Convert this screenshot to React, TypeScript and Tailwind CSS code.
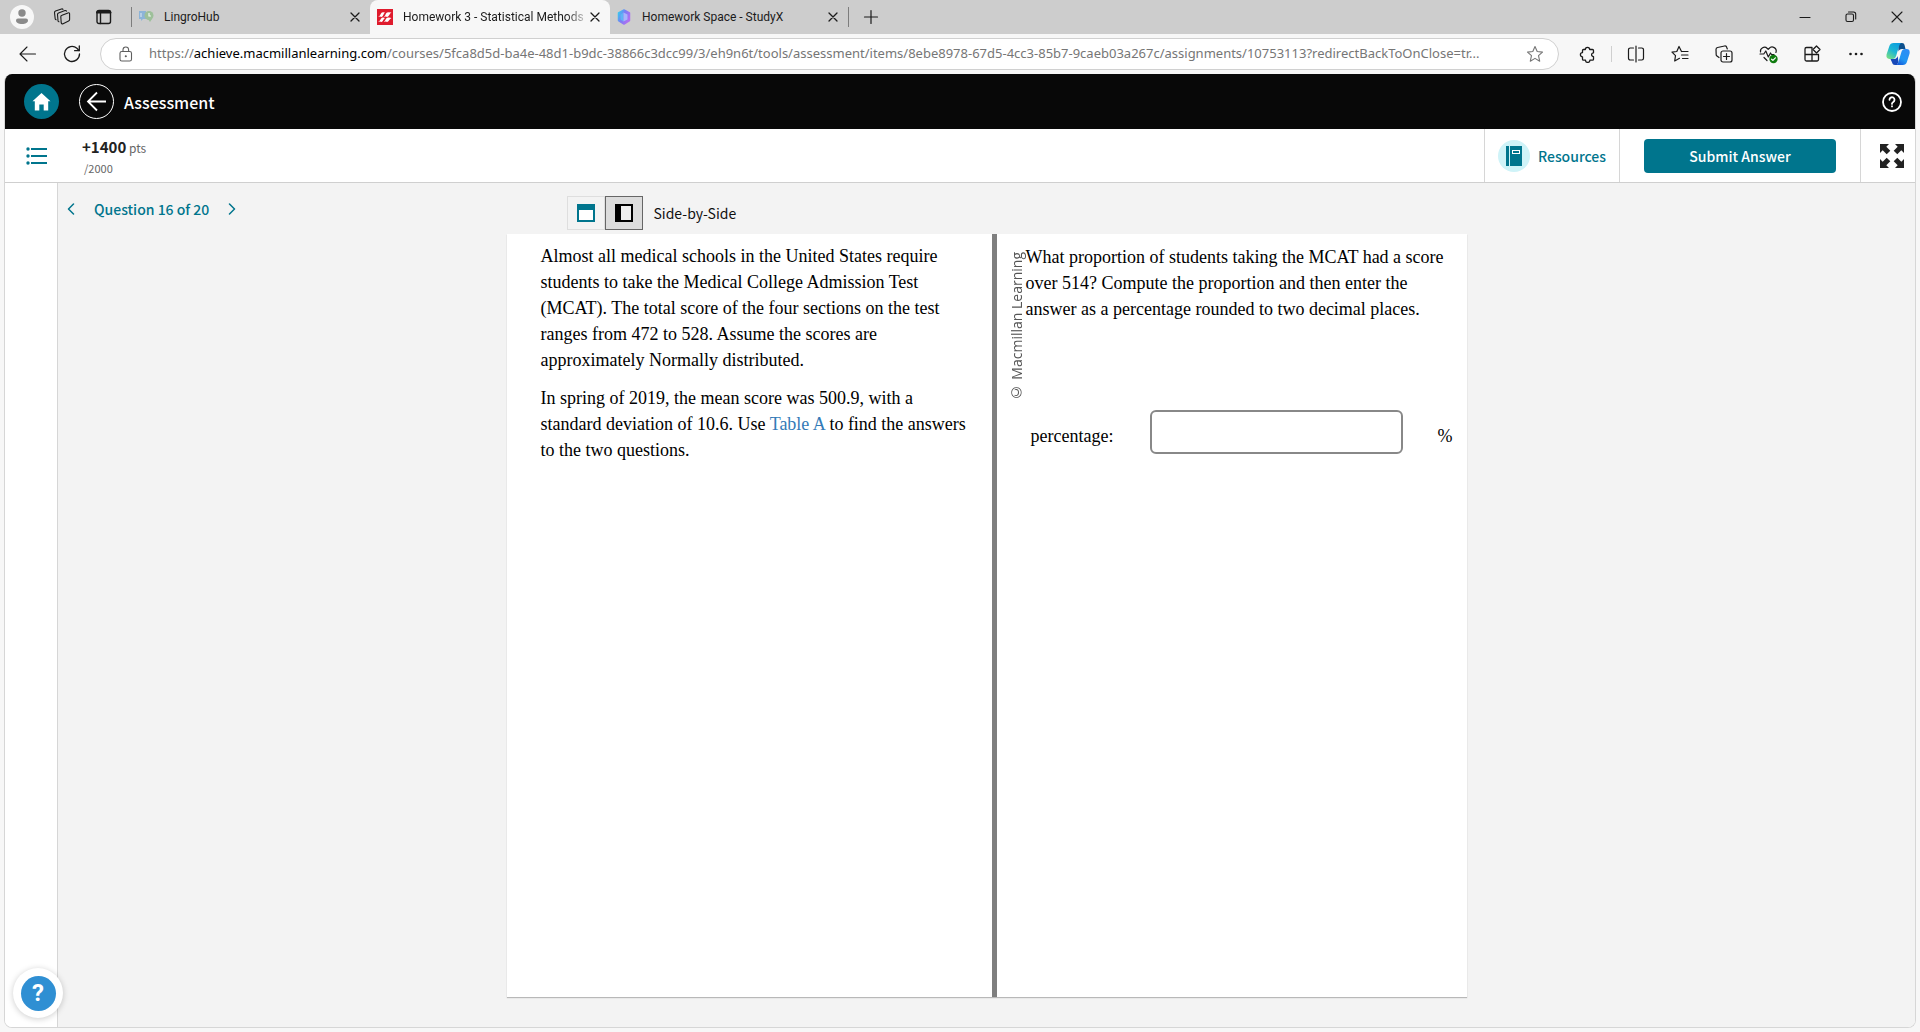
import React, { useState } from 'react';

const uiFont = "font-['Noto_Sans','Open_Sans',sans-serif]";
const appFont = "font-['Noto_Sans_CJK_SC',sans-serif]";
const serifFont = "font-['Liberation_Serif',serif]";

type IconProps = {
    size?: number;
    box?: number;
    stroke?: number;
    className?: string;
    children: React.ReactNode;
};

const Icon = ({ size = 20, box = 20, stroke = 1.1, className = '', children }: IconProps) => (
    <svg
        width={size}
        height={size}
        viewBox={`0 0 ${box} ${box}`}
        fill="none"
        stroke="currentColor"
        strokeWidth={stroke}
        strokeLinecap="round"
        strokeLinejoin="round"
        className={`shrink-0 ${className}`}
        aria-hidden="true"
    >
        {children}
    </svg>
);

const CloseIcon = () => (
    <Icon size={12} box={12} stroke={1.3}>
        <path d="M2 2l8 8M10 2l-8 8" />
    </Icon>
);

const MacmillanLogo = () => (
    <svg width="16" height="16" viewBox="0 0 16 16" className="shrink-0" aria-hidden="true">
        <rect width="16" height="16" fill="#df1b2d" />
        <path d="M1.200 8Q3.200 6.500 4 4.500Q5 2.500 8 3.600Q6.800 4.500 6.300 6Q5.800 7.600 4.600 8Q3 7 1.200 8z" fill="#fff" />
        <path d="M6.800 8Q8.300 6.500 9 4.500Q10 2.500 14.500 3.600Q13 4.500 12.300 6Q11.500 7.600 10.200 8Q8.600 7 6.800 8z" fill="#fff" />
        <path d="M1.200 13Q3.200 11.500 4 9.700Q5 8 8 8.900Q6.800 9.700 6.300 11Q5.800 12.600 4.600 13Q3 12 1.200 13z" fill="#fff" />
        <path d="M6.800 13Q8.300 11.500 9 9.700Q10 8 14.500 8.900Q13 9.700 12.300 11Q11.500 12.600 10.200 13Q8.600 12 6.800 13z" fill="#fff" />
    </svg>
);

const LingroLogo = () => (
    <svg width="15" height="14" viewBox="0 0 15 14" className="shrink-0" aria-hidden="true">
        <path d="M0 1h7v8H4l-2 2V9H0z" fill="#8db4d8" />
        <path d="M2 3v4" stroke="#dfe9f3" strokeWidth="1" />
        <circle cx="10" cy="5.500" r="4.500" fill="#9dc09a" />
        <path d="M9 9h4l-2 3z" fill="#9dc09a" />
        <path d="M10 3v3h2" stroke="#eef5ee" strokeWidth="1.200" fill="none" />
    </svg>
);

const StudyXLogo = () => (
    <svg width="14" height="16" viewBox="0 0 14 16" className="shrink-0" aria-hidden="true">
        <defs>
            <linearGradient id="studyx" x1="0" y1="0" x2="1" y2="0.6">
                <stop offset="0" stopColor="#2fd3ee" />
                <stop offset="0.5" stopColor="#7b7cf5" />
                <stop offset="1" stopColor="#b070f2" />
            </linearGradient>
        </defs>
        <path d="M7 1l5.500 3v7.500L7 15l-5.500-3.500V4z" fill="url(#studyx)" stroke="url(#studyx)" strokeWidth="1.500" strokeLinejoin="round" />
        <path d="M6.500 3.500L3.500 5.500v5l3 2z" fill="#5fb4f5" />
        <path d="M6.500 3.500l4 2v5l-4 2z" fill="#a9b4fb" />
    </svg>
);

const CopilotLogo = () => (
    <svg width="24" height="24" viewBox="0 0 24 24" className="shrink-0" aria-hidden="true">
        <defs>
            <linearGradient id="copilotA" x1="0.8" y1="0" x2="0.1" y2="1">
                <stop offset="0" stopColor="#0a9be0" />
                <stop offset="0.5" stopColor="#1bb6d4" />
                <stop offset="1" stopColor="#7ce07f" />
            </linearGradient>
            <linearGradient id="copilotB" x1="0.8" y1="0" x2="0.2" y2="1">
                <stop offset="0" stopColor="#2f8cf5" />
                <stop offset="0.6" stopColor="#2196f3" />
                <stop offset="1" stopColor="#1557d8" />
            </linearGradient>
        </defs>
        <path d="M12 1h4c1.500 0 2.200.9 2.600 2.200L19.500 7H16c-2 0-3 1-3.500 2.600z" fill="#0d4f8c" />
        <path d="M7.500 1H16c-1.700.2-2.400 1.400-2.900 3l-3 10c-.6 2-1.700 3-3.600 3H3.500C.8 17 0 15 .6 12.300L3.400 4C4 2 5.400 1 7.500 1z" fill="url(#copilotA)" />
        <path d="M4.500 17h4c1.700-.1 2.700-1.200 3.200-2.900L12.500 20l-1.600 3H9c-1.600 0-2.400-.8-2.800-2.200z" fill="#1748b8" />
        <path d="M16.800 23H9.500c1.700-.2 2.400-1.400 2.900-3l3-10c.6-2 1.700-3 3.600-3h1.600c2.700 0 3.500 2 2.900 4.700L20.900 20c-.6 2-2 3-4.100 3z" fill="url(#copilotB)" />
    </svg>
);

const TabBar = () => (
    <header className="flex h-[34px] items-stretch bg-[#cdcdcd] font-['Roboto',sans-serif] text-xs text-[#1b1b1b]">
        <div className="flex w-[131px] shrink-0 items-center">
            <button aria-label="Profile" className="ml-[10px] flex size-6 items-center justify-center rounded-full bg-[#f7f7f7]">
                <svg width="14" height="16" viewBox="0 0 14 16" fill="#8a8a8a" aria-hidden="true">
                    <circle cx="7" cy="4" r="3.700" />
                    <path d="M3 9.500h8a2 2 0 0 1 2 2c0 2-2.500 3.500-6 3.500s-6-1.500-6-3.500a2 2 0 0 1 2-2z" />
                </svg>
            </button>
            <button aria-label="Workspaces" className="ml-[18px] flex size-5 items-center justify-center">
                <Icon size={18} box={18}>
                    <path d="M9 7.200l6-2.300q1.600-.5 1.600 1v5.600q0 1-1 1.500l-5.500 2.700q-1.600.6-1.900-1L7.800 8.800q-.1-1.200 1.200-1.600z" />
                    <path d="M6 13.800q-.8 0-1-1L4.500 6.500q0-1.200 1-1.600L12 2.600q1-.3 1.500.5" />
                    <path d="M3.200 11.800q-.8 0-1-1L1.500 4.700q0-1.200 1-1.600L8.500 1q1-.3 1.500.4" />
                </Icon>
            </button>
            <button aria-label="Tab actions" className="ml-[22px] flex size-5 items-center justify-center">
                <Icon size={16} box={16} stroke={1.4}>
                    <rect x="1" y="1.500" width="13.500" height="13" rx="2" />
                    <path d="M1 3.500h13.500M1.500 2.500h12.500" strokeWidth="2" />
                    <path d="M4.500 4v10.500" />
                </Icon>
            </button>
        </div>
        <div className="my-[7px] w-px shrink-0 bg-[#7d7d7d]" />
        <div className="flex w-[238px] items-center pr-[9px] pl-[7px]">
            <LingroLogo />
            <span className="ml-[10px] flex-1">LingroHub</span>
            <button aria-label="Close tab"><CloseIcon /></button>
        </div>
        <div className="flex w-60 items-center rounded-t-lg bg-[#f7f7f7] pr-[9px] pl-[7px]">
            <MacmillanLogo />
            <span className="ml-[10px] flex-1 overflow-hidden whitespace-nowrap [mask-image:linear-gradient(to_right,black_88%,transparent)]">
                Homework 3 - Statistical Methods
            </span>
            <button aria-label="Close tab"><CloseIcon /></button>
        </div>
        <div className="flex w-[238px] items-center pr-[9px] pl-[7px]">
            <StudyXLogo />
            <span className="ml-[11px] flex-1 whitespace-nowrap">Homework Space - StudyX</span>
            <button aria-label="Close tab"><CloseIcon /></button>
        </div>
        <div className="my-[7px] w-px shrink-0 bg-[#7d7d7d]" />
        <button aria-label="New tab" className="ml-[14px]">
            <Icon size={16} box={16} stroke={1.2}>
                <path d="M8 1.500v13M1.500 8h13" />
            </Icon>
        </button>
        <div className="ml-auto flex">
            <button aria-label="Minimize" className="flex w-[46px] items-center justify-center">
                <Icon size={12} box={12}><path d="M1 6.500h10" /></Icon>
            </button>
            <button aria-label="Restore" className="flex w-[46px] items-center justify-center">
                <Icon size={12} box={12}>
                    <rect x="1" y="3" width="7.500" height="7.500" rx="1.500" />
                    <path d="M3.500 1H8.500a2.200 2.200 0 0 1 2.200 2.200V8" />
                </Icon>
            </button>
            <button aria-label="Close window" className="flex w-[46px] items-center justify-center">
                <Icon size={12} box={12}><path d="M1 1l10 10M11 1L1 11" /></Icon>
            </button>
        </div>
    </header>
);

const ToolButton = ({ label, children }: { label: string; children: React.ReactNode }) => (
    <button aria-label={label} className="flex w-11 shrink-0 items-center justify-center">
        {children}
    </button>
);

const AddressBar = () => (
    <div className="flex h-10 items-center text-[#1b1b1b]">
        <button aria-label="Back" className="ml-[18px]">
            <Icon><path d="M17.500 10H2M9 3l-7 7 7 7" /></Icon>
        </button>
        <button aria-label="Refresh" className="ml-6">
            <Icon stroke={1.3}>
                <path d="M17.500 10a7.500 7.500 0 1 1-2.600-5.700L17 6.500" />
                <path d="M17.300 2v4.700h-4.700" />
            </Icon>
        </button>
        <div className="ml-[18px] flex h-8 min-w-0 flex-1 items-center rounded-full border border-[#d0d0d0] bg-white pr-[14px] pl-[17px]">
            <Icon size={16} box={16} className="text-[#5f5f5f]">
                <rect x="2" y="5.500" width="11.500" height="9.500" rx="1.800" />
                <path d="M5 5.500V3.800a2.800 2.800 0 0 1 5.600 0v1.700" />
                <circle cx="7.800" cy="10.200" r=".5" fill="currentColor" />
            </Icon>
            <div className="ml-[15px] min-w-0 flex-1 truncate text-[13px] text-[#767676]">
                https://<span className="text-black">achieve.macmillanlearning.com</span>/courses/5fca8d5d-ba4e-48d1-b9dc-38866c3dcc99/3/eh9n6t/tools/assessment/items/8ebe8978-67d5-4cc3-85b7-9caeb03a267c/assignments/10753113?redirectBackToOnClose=tr...
            </div>
            <button aria-label="Add to favorites" className="ml-4 text-[#767676]">
                <Icon size={18} box={18}>
                    <path d="M9 1.500l2.200 5 5.300.6-4 3.600 1.200 5.500L9 13.400l-4.700 2.800 1.200-5.500-4-3.600 5.300-.6z" />
                </Icon>
            </button>
        </div>
        <div className="flex shrink-0 items-center pl-1.5">
            <ToolButton label="Extensions">
                <Icon size={17} box={17} stroke={1.3}>
                    <path d="M4.500 3.500h1.800a2.200 2.200 0 0 1 4.400 0h2.800a1 1 0 0 1 1 1v2.300a1.900 1.900 0 1 0 0 3.800v2.600a1 1 0 0 1-1 1h-2.600a2.200 2.200 0 0 1-4.400 0H4.500a1 1 0 0 1-1-1v-2.400a2.100 2.100 0 0 1 0-4.200V4.500a1 1 0 0 1 1-1z" />
                </Icon>
            </ToolButton>
            <div className="mx-0.5 h-4 w-px bg-[#cfcfcf]" />
            <ToolButton label="Split screen">
                <Icon size={18} box={18} stroke={1.2}>
                    <path d="M9 1v16M6.500 3H3.200a1.700 1.700 0 0 0-1.700 1.700v8.600A1.700 1.700 0 0 0 3.200 15h3.300M11.500 3h3.300a1.700 1.700 0 0 1 1.700 1.700v8.600a1.700 1.700 0 0 1-1.700 1.700h-3.300" />
                </Icon>
            </ToolButton>
            <ToolButton label="Favorites">
                <Icon size={18} box={18} stroke={1.2}>
                    <path d="M10.500 6.500L8 1.500 5.800 6.500l-4.800.7 3.500 3.500L3.700 16l4.800-2.700M10.500 6.500h6.500M10.500 10h6.500M11.500 13.500h5.500" />
                </Icon>
            </ToolButton>
            <ToolButton label="Collections">
                <Icon size={18} box={18} stroke={1.2}>
                    <rect x="6" y="6" width="11" height="11" rx="2" />
                    <path d="M11.500 8.500v6M8.500 11.500h6M4 12.500L2 11a2 2 0 0 1-.8-1.200L1 4.500a2 2 0 0 1 1.600-2L9.500 1a2 2 0 0 1 2.300 1.500l.5 1.500" />
                </Icon>
            </ToolButton>
            <ToolButton label="Browser essentials">
                <Icon size={19} box={19} stroke={1.2}>
                    <path d="M8 15.500L5 12.500M1.500 7A4 4 0 0 1 8.300 3.500l.9.900.9-.9a4 4 0 0 1 6.800 4M1 9h3.800l2-3 2.500 6L11.500 8l1 1.500H15" />
                    <circle cx="14.500" cy="14" r="4.200" fill="#107c10" stroke="none" />
                    <path d="M12.600 14.200l1.300 1.200 2.500-2.600" stroke="#fff" />
                </Icon>
            </ToolButton>
            <ToolButton label="Apps">
                <Icon size={18} box={18} stroke={1.3}>
                    <path d="M9 2.500H3.500a1.500 1.500 0 0 0-1.500 1.500v10.500a1.500 1.500 0 0 0 1.500 1.500h10.500a1.500 1.500 0 0 0 1.500-1.500V9.500H2M9 2.500V16" />
                    <path d="M13.500 1l3.500 3.500L13.500 8 10 4.500z" fill="#f7f7f7" />
                </Icon>
            </ToolButton>
            <ToolButton label="Settings and more">
                <Icon size={16} box={16}>
                    <g fill="currentColor" stroke="none">
                        <circle cx="2.500" cy="8" r="1.300" />
                        <circle cx="8" cy="8" r="1.300" />
                        <circle cx="13.500" cy="8" r="1.300" />
                    </g>
                </Icon>
            </ToolButton>
            <button aria-label="Copilot" className="pr-[10px] pl-2">
                <CopilotLogo />
            </button>
        </div>
    </div>
);

const AppHeader = () => (
    <div className="flex h-[55px] shrink-0 items-center bg-[#080808] pr-[13px] pl-[19px] text-white">
        <a href="#home" aria-label="Home" className="flex size-[35px] items-center justify-center rounded-full bg-[#00758d]">
            <svg width="19" height="19" viewBox="0 0 19 19" fill="#fff" aria-hidden="true">
                <path d="M9.500 1l9 8.200h-2.300V18.500h-4.500v-6h-4.400v6H2.800V9.200H.5z" />
            </svg>
        </a>
        <a href="#back" aria-label="Back" className="ml-5 flex size-[35px] items-center justify-center rounded-full border border-white">
            <Icon size={21} box={21} stroke={1.8}>
                <path d="M20 10.500H2M11 1.500l-9 9 9 9" strokeLinecap="butt" strokeLinejoin="miter" />
            </Icon>
        </a>
        <h1 className="ml-[10px] text-base font-medium">Assessment</h1>
        <button aria-label="Help" className="ml-auto">
            <Icon stroke={1.8}>
                <circle cx="10" cy="10" r="9" />
                <path d="M7.500 7.800a2.500 2.500 0 1 1 3.800 2.100c-.8.500-1.300.8-1.300 1.700v.3M10 14.200v.2" />
            </Icon>
        </button>
    </div>
);

const ScoreBar = () => (
    <div className="flex h-[54px] shrink-0 items-stretch border-b border-[#cfcfcf] bg-white">
        <button aria-label="Question list" className="ml-[21px] flex items-center text-[#00758d]">
            <svg width="22" height="18" viewBox="0 0 22 18" fill="currentColor" aria-hidden="true">
                <circle cx="2" cy="2" r="1.700" />
                <circle cx="2" cy="9" r="1.700" />
                <circle cx="2" cy="16" r="1.700" />
                <path d="M5 1h16v2H5zM5 8h16v2H5zM5 15h16v2H5z" />
            </svg>
        </button>
        <div className="ml-[34px] flex flex-col pt-2 text-xs leading-5 text-[#666]">
            <p>
                <strong className="text-[15px] font-bold text-[#222]">+1400</strong> pts
            </p>
            <p className="pl-0.5 text-[11px]">/2000</p>
        </div>
        <button className="ml-auto flex items-center border-l border-[#d6d6d6] px-[13px] text-sm font-medium text-[#00758d]">
            <svg width="32" height="32" viewBox="0 0 32 32" aria-hidden="true">
                <circle cx="16" cy="16" r="16" fill="#cff3f8" />
                <path d="M8 6h3v20H8zM12 6h12v20H12z" fill="#00758d" />
                <rect x="14.500" y="10.500" width="7" height="3" fill="none" stroke="#fff" />
            </svg>
            <span className="ml-2">Resources</span>
        </button>
        <div className="flex items-center border-x border-[#d6d6d6] px-6">
            <button className="h-[34px] w-48 rounded bg-[#00758d] text-sm font-medium text-white">Submit Answer</button>
        </div>
        <button aria-label="Full screen" className="flex w-[54px] items-center justify-center pl-2">
            <svg width="24" height="24" viewBox="0 0 24 24" fill="#222" aria-hidden="true">
                <path d="M0 0h9L6.300 2.700l4 4-3.600 3.600-4-4L0 9z" />
                <path d="M0 0h9L6.300 2.700l4 4-3.600 3.600-4-4L0 9z" transform="rotate(90 12 12)" />
                <path d="M0 0h9L6.300 2.700l4 4-3.600 3.600-4-4L0 9z" transform="rotate(180 12 12)" />
                <path d="M0 0h9L6.300 2.700l4 4-3.600 3.600-4-4L0 9z" transform="rotate(270 12 12)" />
            </svg>
        </button>
    </div>
);

const QuestionNav = () => (
    <nav className="flex h-6 items-center pt-0.5 pl-2 text-[#00758d]">
        <button aria-label="Previous question">
            <Icon size={12} box={12} stroke={1.5}><path d="M7.500 1L2.500 6l5 5" /></Icon>
        </button>
        <span className="mx-4 text-sm font-medium whitespace-nowrap">Question 16 of 20</span>
        <button aria-label="Next question">
            <Icon size={12} box={12} stroke={1.5}><path d="M4.500 1l5 5-5 5" /></Icon>
        </button>
    </nav>
);

const App = () => {
    const [percentage, setPercentage] = useState('');

    return (
        <div className={`flex h-screen flex-col bg-[#f7f7f7] ${uiFont}`}>
            <TabBar />
            <AddressBar />

            <div className={`mx-1 mb-1 flex min-h-0 flex-1 flex-col overflow-hidden rounded-lg border-x border-b border-[#d6d6d6] bg-white ${appFont}`}>
                <AppHeader />
                <ScoreBar />

                <div className="flex min-h-0 flex-1">
                    {/* Sidebar */}
                    <aside className="relative w-[53px] shrink-0 border-r border-[#d6d6d6] bg-white">
                        <div className="absolute bottom-[9px] left-2 z-10 flex size-[50px] items-center justify-center rounded-full bg-white shadow-[0_1px_6px_rgba(0,0,0,0.2)]">
                            <button aria-label="Support" className="flex size-[35px] items-center justify-center rounded-full bg-[#2f8fd3] font-['Roboto',sans-serif] text-2xl font-bold text-white">
                                ?
                            </button>
                        </div>
                    </aside>

                    {/* Question */}
                    <main className="grid min-w-0 flex-1 grid-cols-[1fr_minmax(0,960px)_1fr] bg-[#f3f3f3] pt-[13px] pb-[30px]">
                        <QuestionNav />

                        <div className="flex flex-col">
                            <div className="flex items-center pl-[60px]">
                                <button aria-label="Stacked view" className="flex h-[34px] w-[38px] items-center justify-center border border-[#dedede] text-[#00758d]">
                                    <svg width="18" height="18" viewBox="0 0 18 18" aria-hidden="true">
                                        <path d="M1 1h16v16H1z" fill="#fff" stroke="currentColor" strokeWidth="2" />
                                        <path d="M0 0h18v6H0z" fill="currentColor" />
                                    </svg>
                                </button>
                                <button aria-label="Side-by-side view" className="flex h-[34px] w-[38px] items-center justify-center border border-[#666] bg-[#dcdcdc] text-black">
                                    <svg width="18" height="18" viewBox="0 0 18 18" aria-hidden="true">
                                        <path d="M1 1h16v16H1z" fill="#eee" stroke="currentColor" strokeWidth="2" />
                                        <path d="M0 0h6v18H0z" fill="currentColor" />
                                    </svg>
                                </button>
                                <span className="ml-[11px] text-sm text-[#111]">Side-by-Side</span>
                            </div>

                            <div className={`mt-1 flex min-h-0 flex-1 bg-white text-lg leading-[26px] text-black shadow-[0_1px_1px_#b8b8b8] ${serifFont}`}>
                                <section className="w-[485px] space-y-3 pt-[9px] pr-[22px] pl-[34px]">
                                    <p>
                                        Almost all medical schools in the United States require students to take the Medical College
                                        Admission Test (MCAT). The total score of the four sections on the test ranges from 472 to
                                        528. Assume the scores are approximately Normally distributed.
                                    </p>
                                    <p>
                                        In spring of 2019, the mean score was 500.9, with a standard deviation of 10.6. Use{' '}
                                        <a href="#table-a" className="text-[#337ab7]">Table A</a> to find the answers to the two
                                        questions.
                                    </p>
                                </section>
                                <div className="w-[5px] shrink-0 bg-[#7f7f7f]" />
                                <section className="flex min-w-0 flex-1 items-start pt-[10px] pl-[10px]">
                                    <p className="mt-2 w-[19px] shrink-0 rotate-180 font-['Open_Sans',sans-serif] text-sm leading-[19px] whitespace-nowrap text-[#555] [writing-mode:vertical-rl]">
                                        © Macmillan Learning
                                    </p>
                                    <div className="min-w-0 flex-1">
                                        <p className="pr-4">
                                            What proportion of students taking the MCAT had a score over 514? Compute the proportion
                                            and then enter the answer as a percentage rounded to two decimal places.
                                        </p>
                                        <div className="mt-22 flex items-center pr-[14px] pl-[5px]">
                                            <label htmlFor="percentage" className="w-[119px] pt-2">percentage:</label>
                                            <input
                                                id="percentage"
                                                type="text"
                                                value={percentage}
                                                onChange={(e) => setPercentage(e.target.value)}
                                                className="h-11 w-[253px] rounded-md border-2 border-[#888] bg-white px-3"
                                            />
                                            <span className="ml-auto pt-2">%</span>
                                        </div>
                                    </div>
                                </section>
                            </div>
                        </div>
                    </main>
                </div>
            </div>
        </div>
    );
};

export default App;
